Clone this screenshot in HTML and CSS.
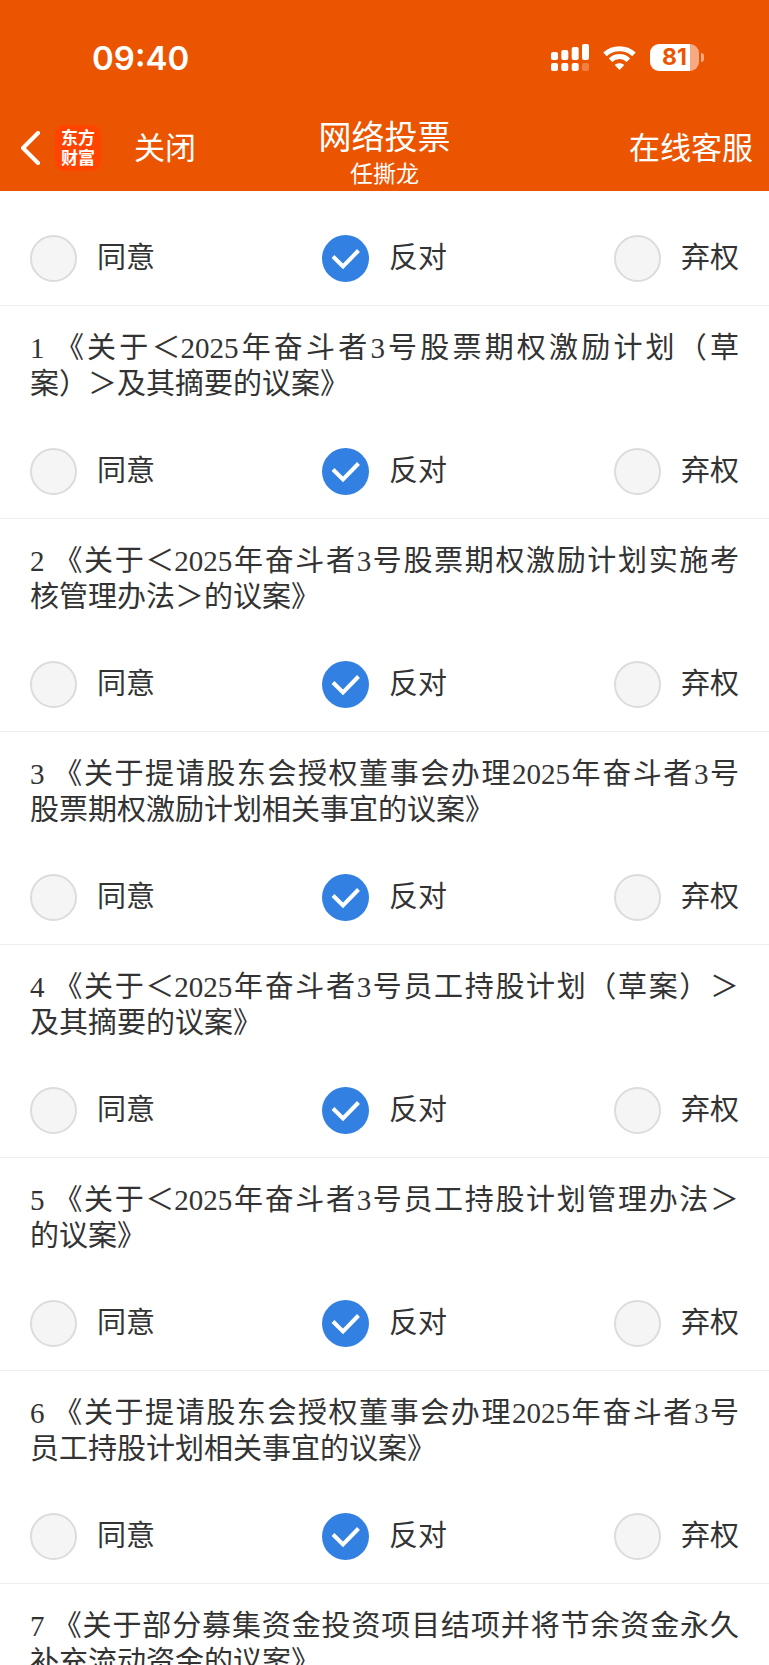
FILE: index.html
```html
<!DOCTYPE html>
<html lang="zh-CN">
<head>
<meta charset="utf-8">
<meta name="viewport" content="width=device-width, initial-scale=1">
<title>网络投票</title>
<link rel="stylesheet" href="styles.css">
</head>
<body>
<header class="header">
  <div class="status">
    <time class="clock">09:40</time>
    <div class="indicators">
      <svg class="signal" viewBox="0 0 38 27" width="38" height="27" fill="#fff" aria-hidden="true">
        <rect x="0" y="8" width="7" height="8" rx="2"/>
        <rect x="10.300" y="6" width="7" height="10" rx="2"/>
        <rect x="20.700" y="3" width="7" height="13" rx="2"/>
        <rect x="31" y="0" width="7" height="16" rx="2"/>
        <rect x="0" y="19" width="7" height="8" rx="2"/>
        <rect x="10.300" y="19" width="7" height="8" rx="2"/>
        <rect x="20.700" y="19" width="7" height="8" rx="2"/>
        <rect x="31" y="19" width="7" height="8" rx="2" opacity=".25"/>
      </svg>
      <svg class="wifi" viewBox="0 0 33 25" width="33" height="25" fill="none" stroke="#fff" stroke-width="5" aria-hidden="true">
        <path d="M2 9.400C10 1.700 23 1.700 31 9.400"/>
        <path d="M7.600 15.200C12.500 10.400 20.500 10.400 25.400 15.200"/>
        <path d="M16.500 25 11.700 20.100C14.400 17.600 18.600 17.600 21.300 20.100Z" fill="#fff" stroke="none"/>
      </svg>
      <div class="battery"><span class="level">81</span></div>
    </div>
  </div>
  <nav class="nav">
    <div class="nav-left">
      <button class="back" type="button" aria-label="返回">
        <svg viewBox="0 0 20 34" width="20" height="34" fill="none" stroke="#fff" stroke-width="4" stroke-linecap="round" stroke-linejoin="round"><path d="M18 2 3 17 18 32"/></svg>
      </button>
      <div class="logo">东方<br>财富</div>
      <button class="nav-button" type="button">关闭</button>
    </div>
    <div class="heading">
      <h1 class="title">网络投票</h1>
      <p class="subtitle">任撕龙</p>
    </div>
    <div class="nav-right">
      <button class="nav-button" type="button">在线客服</button>
    </div>
  </nav>
</header>
<main class="list">
  <section class="item item-first">
    <div class="options" role="radiogroup" aria-label="总议案">
      <label class="option"><input class="radio" type="radio" name="v0"><span class="option-text">同意</span></label>
      <label class="option"><input class="radio" type="radio" name="v0" checked><span class="option-text">反对</span></label>
      <label class="option"><input class="radio" type="radio" name="v0"><span class="option-text">弃权</span></label>
    </div>
  </section>
  <section class="item">
    <h2 class="proposal" id="p1">1 《关于＜2025年奋斗者3号股票期权激励计划（草<span class="keep">案）＞</span>及其摘要的议案》</h2>
    <div class="options" role="radiogroup" aria-labelledby="p1">
      <label class="option"><input class="radio" type="radio" name="v1"><span class="option-text">同意</span></label>
      <label class="option"><input class="radio" type="radio" name="v1" checked><span class="option-text">反对</span></label>
      <label class="option"><input class="radio" type="radio" name="v1"><span class="option-text">弃权</span></label>
    </div>
  </section>
  <section class="item">
    <h2 class="proposal" id="p2">2 《关于＜2025年奋斗者3号股票期权激励计划实施考<span class="keep">核管理</span>办法＞的议案》</h2>
    <div class="options" role="radiogroup" aria-labelledby="p2">
      <label class="option"><input class="radio" type="radio" name="v2"><span class="option-text">同意</span></label>
      <label class="option"><input class="radio" type="radio" name="v2" checked><span class="option-text">反对</span></label>
      <label class="option"><input class="radio" type="radio" name="v2"><span class="option-text">弃权</span></label>
    </div>
  </section>
  <section class="item">
    <h2 class="proposal" id="p3">3 《关于提请股东会授权董事会办理2025年奋斗者3号<span class="keep">股票</span>期权激励计划相关事宜的议案》</h2>
    <div class="options" role="radiogroup" aria-labelledby="p3">
      <label class="option"><input class="radio" type="radio" name="v3"><span class="option-text">同意</span></label>
      <label class="option"><input class="radio" type="radio" name="v3" checked><span class="option-text">反对</span></label>
      <label class="option"><input class="radio" type="radio" name="v3"><span class="option-text">弃权</span></label>
    </div>
  </section>
  <section class="item">
    <h2 class="proposal" id="p4">4 《关于＜2025年奋斗者3号员工持股计划（草案）＞<span class="keep">及其</span>摘要的议案》</h2>
    <div class="options" role="radiogroup" aria-labelledby="p4">
      <label class="option"><input class="radio" type="radio" name="v4"><span class="option-text">同意</span></label>
      <label class="option"><input class="radio" type="radio" name="v4" checked><span class="option-text">反对</span></label>
      <label class="option"><input class="radio" type="radio" name="v4"><span class="option-text">弃权</span></label>
    </div>
  </section>
  <section class="item">
    <h2 class="proposal" id="p5">5 《关于＜2025年奋斗者3号员工持股计划管理办法＞<span class="keep">的议案》</span></h2>
    <div class="options" role="radiogroup" aria-labelledby="p5">
      <label class="option"><input class="radio" type="radio" name="v5"><span class="option-text">同意</span></label>
      <label class="option"><input class="radio" type="radio" name="v5" checked><span class="option-text">反对</span></label>
      <label class="option"><input class="radio" type="radio" name="v5"><span class="option-text">弃权</span></label>
    </div>
  </section>
  <section class="item">
    <h2 class="proposal" id="p6">6 《关于提请股东会授权董事会办理2025年奋斗者3号<span class="keep">员工</span>持股计划相关事宜的议案》</h2>
    <div class="options" role="radiogroup" aria-labelledby="p6">
      <label class="option"><input class="radio" type="radio" name="v6"><span class="option-text">同意</span></label>
      <label class="option"><input class="radio" type="radio" name="v6" checked><span class="option-text">反对</span></label>
      <label class="option"><input class="radio" type="radio" name="v6"><span class="option-text">弃权</span></label>
    </div>
  </section>
  <section class="item">
    <h2 class="proposal" id="p7">7 《关于部分募集资金投资项目结项并将节余资金永久补充流动资金的议案》</h2>
  </section>
</main>
</body>
</html>
```
FILE: styles.css
```css
* {
  box-sizing: border-box;
}

body {
  margin: 0;
  height: 100vh;
  display: flex;
  flex-direction: column;
  overflow: hidden;
  background: #fff;
  color: #333;
  font-family: "Liberation Serif", "Noto Sans CJK SC", sans-serif;
}

.header {
  flex: none;
  background: #eb5502;
  color: #fff;
  font-family: "Noto Sans CJK SC", sans-serif;
}

.status {
  display: flex;
  justify-content: space-between;
  align-items: center;
  height: 105px;
  padding: 10px 65px 0 92px;
}

.clock {
  font: 600 33px/40px Inter, sans-serif;
}

.indicators {
  display: flex;
  align-items: center;
  gap: 14px;
}

.battery {
  position: relative;
  width: 49px;
  height: 27px;
  margin-right: 5px;
  border-radius: 9px;
  background: linear-gradient(90deg, #fff 81%, #f5aa81 81%);
  color: #eb5502;
  font: 700 23px/27px Inter, sans-serif;
  text-align: center;
}

.battery::after {
  content: "";
  position: absolute;
  right: -5px;
  top: 9px;
  width: 3px;
  height: 9px;
  border-radius: 0 3px 3px 0;
  background: #f5aa81;
}

.nav {
  display: grid;
  grid-template-columns: 1fr auto 1fr;
  align-items: center;
  height: 86px;
  padding: 0 16px;
}

.nav-left {
  display: flex;
  align-items: center;
  padding-left: 4px;
}

.nav-right {
  display: flex;
  justify-content: flex-end;
}

.back,
.nav-button {
  padding: 0;
  border: 0;
  background: none;
  color: inherit;
  font: 400 31px/40px "Noto Sans CJK SC", sans-serif;
}

.nav-button {
  padding-bottom: 4px;
}

.back {
  display: flex;
}

.logo {
  width: 46px;
  height: 46px;
  margin: 0 33px 0 15px;
  padding: 2px 0;
  border-radius: 9px;
  background: #ff4400;
  font-size: 17px;
  font-weight: 700;
  line-height: 20px;
  text-align: center;
}

.heading {
  align-self: end;
  padding-bottom: 4px;
  text-align: center;
}

.title {
  margin: 0;
  font-size: 33px;
  font-weight: 400;
  line-height: 44px;
}

.subtitle {
  margin: 0;
  font-size: 23px;
  line-height: 30px;
}

.list {
  flex: 1;
  min-height: 0;
  overflow-y: auto;
  scrollbar-width: none;
}

.item {
  padding: 24px 30px 23px;
  border-bottom: 1px solid #eee;
}

.item-first {
  padding-top: 44px;
}

.proposal {
  margin: 0 0 46px;
  font-size: 29px;
  font-weight: 400;
  line-height: 36px;
  text-align: justify;
  text-spacing-trim: space-all;
}

.keep {
  white-space: nowrap;
}

.options {
  display: flex;
  justify-content: space-between;
}

.option {
  display: flex;
  align-items: center;
  gap: 20px;
  font-size: 29px;
  line-height: 40px;
}

.option-text {
  padding-bottom: 2px;
}

.radio {
  appearance: none;
  width: 47px;
  height: 47px;
  margin: 0;
  border: 2px solid #dcdcdc;
  border-radius: 50%;
  background: #f5f5f5;
}

.radio:checked {
  border: 0;
  background: #3280e2 url("data:image/svg+xml,%3Csvg xmlns='http://www.w3.org/2000/svg' viewBox='0 0 47 47'%3E%3Cpath d='M11 21.500 21 31.500 36.500 15.500' fill='none' stroke='%23fff' stroke-width='4'/%3E%3C/svg%3E") center / 47px 47px no-repeat;
}
```
